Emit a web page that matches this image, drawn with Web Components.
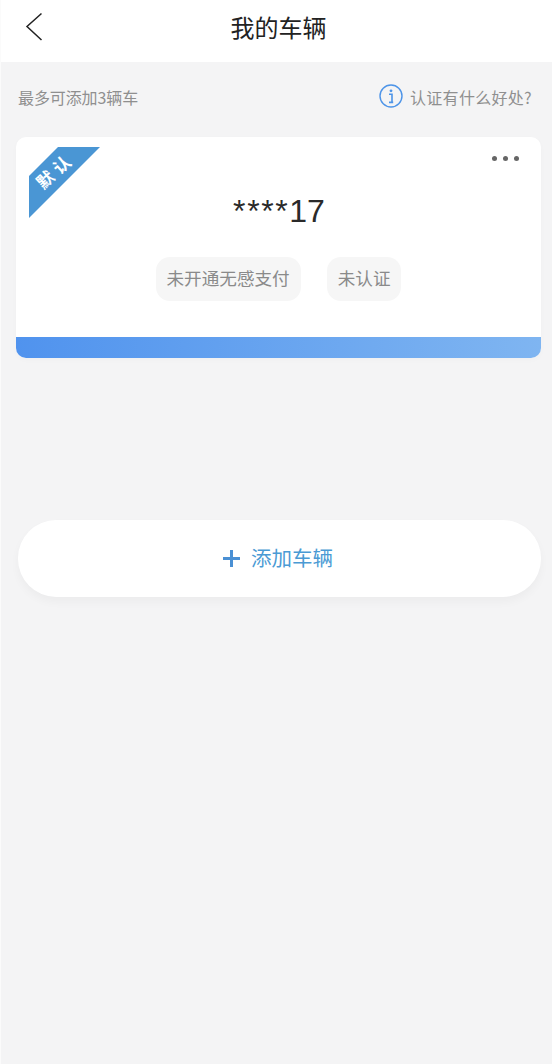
<!DOCTYPE html>
<html lang="zh-CN">
<head>
<meta charset="utf-8">
<title>我的车辆</title>
<style>
  html, body { margin: 0; height: 100%; }
  body {
    box-sizing: border-box;
    width: 552px;
    min-height: 1064px;
    background: #f4f4f5;
    border-left: 1px solid #fbfbfb;
    font-family: "Noto Sans CJK SC", "Noto Sans", sans-serif;
    display: flex;
    flex-direction: column;
    overflow: hidden;
  }
</style>
</head>
<body>
  <app-header>我的车辆</app-header>
  <info-bar hint="认证有什么好处?">最多可添加3辆车</info-bar>
  <vehicle-card plate="17" mask="****" ribbon="默认">
    <status-tag>未开通无感支付</status-tag>
    <status-tag>未认证</status-tag>
  </vehicle-card>
  <add-button>添加车辆</add-button>

<script>
(function (customElements) {

  const FONT = '"Noto Sans CJK SC", "Noto Sans", sans-serif';

  const attach = (el, html) => {
    el.attachShadow({ mode: 'open' }).innerHTML = html;
  };

  class AppHeader extends HTMLElement {
    constructor() {
      super();
      attach(this, `
      <style>
        :host { display: flex; align-items: center; justify-content: center; height: 62px; background: #fff; position: relative; }
        .title { font: 400 24px/1 ${FONT}; color: #222; margin: -9px 0 0 4px; }
        svg { position: absolute; left: 24px; top: 12px; }
      </style>
      <svg width="18" height="30" viewBox="0 0 18 30" fill="none" stroke="#222" stroke-width="1.5">
        <path d="M16.5 1.5 L2 14.5 L16.5 28"/>
      </svg>
      <span class="title"><slot></slot></span>`);
    }
  }
  customElements.define('app-header', AppHeader);

  class InfoBar extends HTMLElement {
    constructor() {
      super();
      attach(this, `
      <style>
        :host { display: flex; align-items: center; justify-content: space-between; height: 75px; padding: 0 20px 0 17px; color: #8f8f8f; font: 400 16px/1 ${FONT}; }
        .left { margin-top: -6px; letter-spacing: -.1px; }
        .hint { display: flex; align-items: center; gap: 7px; margin-top: -6px; letter-spacing: .3px; }
        svg { display: block; margin-top: -2px; }
      </style>
      <span class="left"><slot></slot></span>
      <span class="hint">
        <svg width="24" height="24" viewBox="0 0 24 24" fill="none">
          <circle cx="12" cy="12" r="11" stroke="#4d94e8" stroke-width="1.4"/>
          <circle cx="12" cy="6.8" r="1.4" fill="#4d94e8"/>
          <path d="M10 10.2h3v8M10 18.4h4.2" stroke="#4d94e8" stroke-width="1.6"/>
        </svg>
        <span>${this.getAttribute('hint')}</span>
      </span>`);
    }
  }
  customElements.define('info-bar', InfoBar);

  class VehicleCard extends HTMLElement {
    constructor() {
      super();
      attach(this, `
      <style>
        :host { display: block; position: relative; margin: 0 11px 0 15px; border-radius: 10px; background: #fff; overflow: hidden; box-shadow: 0 2px 6px rgba(0,0,0,.02); }
        .ribbon { position: absolute; left: 13px; top: 10px; }
        .ribbon-wrap { position: absolute; left: 13px; top: 10px; width: 71px; height: 72px; }
        .ribbon-text { position: absolute; left: 2px; top: 13px; width: 48px; text-align: center; transform: rotate(-42deg); font: 700 17px/20px ${FONT}; color: #fff; letter-spacing: 5px; white-space: nowrap; }
        .dots { position: absolute; right: 22px; top: 19px; display: flex; gap: 6px; }
        .dots i { width: 5px; height: 5px; border-radius: 50%; background: #666; }
        .body { height: 200px; display: flex; flex-direction: column; align-items: center; box-sizing: border-box; padding-top: 54px; }
        .plate { font: 400 32px/40px "Liberation Sans", sans-serif; color: #2a2a2a; margin-left: 1px; }
        .mask { letter-spacing: 1.6px; }
        .tags { display: flex; gap: 26px; margin-top: 26px; }
        .band { height: 21px; background: linear-gradient(90deg, #5093ee, #7fb5f1); }
      </style>
      <svg class="ribbon" width="71" height="72" viewBox="0 0 71 72">
        <path d="M29 0 H71 L0 71 V29 Z" fill="#4a96d4"/>
      </svg>
      <div class="ribbon-wrap">
        <span class="ribbon-text">${this.getAttribute('ribbon')}</span>
      </div>
      <div class="dots"><i></i><i></i><i></i></div>
      <div class="body">
        <div class="plate"><span class="mask">${this.getAttribute('mask')}</span>${this.getAttribute('plate')}</div>
        <div class="tags"><slot></slot></div>
      </div>
      <div class="band"></div>`);
    }
  }
  customElements.define('vehicle-card', VehicleCard);

  class StatusTag extends HTMLElement {
    constructor() {
      super();
      attach(this, `
      <style>
        :host { display: flex; align-items: center; height: 44px; padding: 0 11px; border-radius: 14px; background: #f6f6f6; color: #8a8a8a; font: 400 17.6px/1 ${FONT}; white-space: nowrap; }
        span { margin-top: -2px; }
      </style>
      <span><slot></slot></span>`);
    }
  }
  customElements.define('status-tag', StatusTag);

  class AddButton extends HTMLElement {
    constructor() {
      super();
      attach(this, `
      <style>
        :host { display: flex; align-items: center; justify-content: center; gap: 11px; height: 77px; margin: 162px 11px 0 17px; padding-right: 3px; border-radius: 38px; background: #fff; color: #4a9ad4; font: 400 20.5px/1 ${FONT}; box-shadow: 0 5px 10px rgba(0,0,0,.035); }
        svg { display: block; }
        span { margin-top: -2px; }
      </style>
      <svg width="17" height="17" viewBox="0 0 17 17">
        <path d="M0 8.5H17M8.5 0V17" stroke="#4a90d4" stroke-width="3"/>
      </svg>
      <span><slot></slot></span>`);
    }
  }
  customElements.define('add-button', AddButton);

})(window.customElements);
</script>
</body>
</html>
